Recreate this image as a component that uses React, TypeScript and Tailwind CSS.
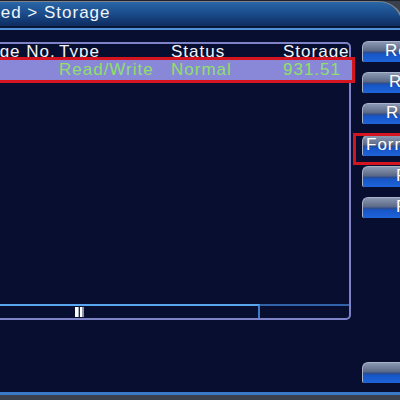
import React from 'react';

const buttons = [
  { label: 'Read/Write', pad: 'pl-[22px]' },
  { label: 'Read Only', pad: 'pl-[26px]' },
  { label: 'Redundant', pad: 'pl-[23px]' },
  { label: 'Format Storage', pad: 'pl-[3px]', extra: 'mt-[1px]' },
  { label: 'Recover', pad: 'pl-[33px]' },
  { label: 'Partition', pad: 'pl-[33px]' },
];

function DvrButton({ label, pad, extra = '' }: { label: string; pad: string; extra?: string }) {
  return (
    <div
      className={`h-[21px] w-[120px] shrink-0 rounded-tl-[6px] rounded-bl-[2px] border-t border-l border-[#a9b4c8] bg-[linear-gradient(to_bottom,#8b98b3_0%,#5d6b88_42%,#2f4d8e_52%,#1655c6_60%,#1f64da_100%)] text-white whitespace-nowrap leading-[17px] ${pad} ${extra}`}
    >
      {label}
    </div>
  );
}

export default function App() {
  return (
    <div className="relative w-[400px] h-[400px] overflow-hidden bg-[#3a404c] flex flex-col font-['Liberation_Sans',Arial,sans-serif] text-[17px] tracking-[1px]">
      {/* Title bar */}
      <div className="h-[1px] shrink-0 bg-[#1c222e]" />
      <div className="h-[25px] w-[404px] shrink-0 rounded-tr-[26px] border-t border-r-2 border-[#7e8288] bg-gradient-to-b from-[#2a66a8] via-[#1a4b8a] to-[#0f2c60] flex items-start">
        <span className="-ml-[62px] leading-[22px] text-[#f2f4f8] whitespace-nowrap">Advanced &gt; Storage</span>
      </div>
      <div className="h-[2px] shrink-0 bg-[#0a1636]" />
      <div className="h-[2px] shrink-0 bg-[#4f90d8]" />

      {/* Body */}
      <div className="h-[365px] shrink-0 bg-[#070e30] border-b-[3px] border-[#3a78c8] flex">
        {/* Storage list */}
        <div className="-ml-[53px] mt-[12px] w-[404px] h-[278px] shrink-0 border-2 border-[#7d83c6] rounded-[5px] flex flex-col">
          <div className="h-[16px] leading-[16px] pl-[5px] grid grid-cols-[105px_112px_112px_1fr] text-[#f4f4f8] whitespace-nowrap">
            <span>Storage No.</span>
            <span>Type</span>
            <span>Status</span>
            <span>Storage</span>
          </div>
          <div className="h-[20px] leading-[20px] -mr-[3px] pl-[5px] grid grid-cols-[105px_112px_112px_1fr] bg-[#8987d8] text-[#8fe06a] whitespace-nowrap outline-[3px] outline-solid outline-[#d4141e]">
            <span>1</span>
            <span>Read/Write</span>
            <span>Normal</span>
            <span>931.51</span>
          </div>
          <div className="flex-1" />
          {/* Horizontal scroll bar */}
          <div className="h-[14px] flex">
            <div className="w-[311px] border-t-2 border-r-2 border-t-[#5aa6ee] border-r-[#3c7ccc]">
              <div className="ml-[126px] mt-[1px] h-[10px] flex">
                <div className="w-[3px] bg-white" />
                <div className="w-[1px] bg-[#a8b0c0]" />
                <div className="w-[1px] bg-[#1a2040]" />
                <div className="w-[2px] bg-white" />
                <div className="w-[2px] bg-[#8a94ac]" />
              </div>
            </div>
            <div className="flex-1 border-t-2 border-[#2f62a8]" />
          </div>
        </div>

        {/* Action buttons */}
        <div className="ml-[11px] pt-[11px] pb-[9px] flex flex-col gap-[10px]">
          {buttons.map((b) => (
            <DvrButton key={b.label} label={b.label} pad={b.pad} extra={b.extra} />
          ))}
          <div className="mt-auto">
            <DvrButton label="Cancel" pad="pl-[50px]" />
          </div>
        </div>
      </div>

      {/* Annotation around Format */}
      <div className="absolute left-[353px] top-[133px] w-[60px] h-[32px] border-[3px] border-[#d4141e]" />
    </div>
  );
}
